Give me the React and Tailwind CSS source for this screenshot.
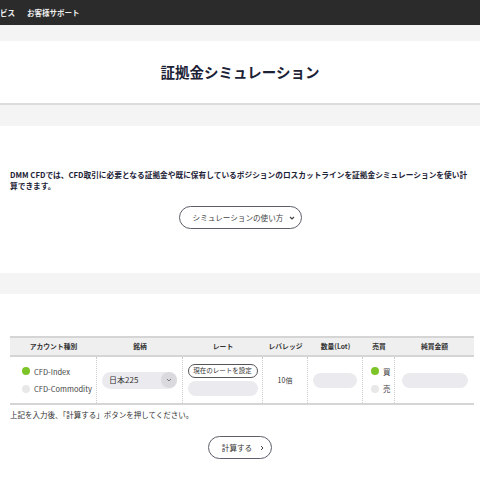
import React from 'react';

const font = { fontFamily: '"Noto Sans CJK JP", "Noto Sans", sans-serif' };

function Radio({ on, label }) {
  return (
    <div className="flex items-center gap-[4px]">
      <span className={`w-[8px] h-[8px] rounded-full ${on ? 'bg-[#7cc427]' : 'bg-[#e8e8e8]'}`}></span>
      <span className="text-[7.5px] text-[#444]">{label}</span>
    </div>
  );
}

function Pill({ className = '' }) {
  return <div className={`h-[15px] rounded-full bg-[#ebebef] ${className}`}></div>;
}

export default function App() {
  const cols = [
    { label: 'アカウント種別', w: 'w-[87px]' },
    { label: '銘柄', w: 'w-[86px]' },
    { label: 'レート', w: 'w-[80px]' },
    { label: 'レバレッジ', w: 'w-[45px]' },
    { label: '数量(Lot)', w: 'w-[55px]' },
    { label: '売買', w: 'w-[32px]' },
    { label: '純買金額', w: 'flex-1' },
  ];

  return (
    <div className="w-[480px] h-[480px] overflow-hidden bg-[#f4f4f4]" style={font}>
      {/* top nav */}
      <div className="h-[25px] bg-[#2b2b2b] flex items-center gap-[12px] text-[7.5px] font-bold text-[#eee]">
        <span>ビス</span>
        <span>お客様サポート</span>
      </div>

      <div className="h-[16px]"></div>

      {/* title */}
      <div className="h-[64px] bg-white border-b-2 border-[#dcdcdc] flex items-center justify-center">
        <h1 className="text-[14.5px] font-bold text-[#1c2236]">証拠金シミュレーション</h1>
      </div>

      <div className="h-[21px]"></div>

      {/* intro */}
      <div className="h-[147px] bg-white px-[10px] pt-[43px]">
        <p className="text-[7.7px] font-bold text-[#1c2236] leading-[11px]">
          DMM CFDでは、CFD取引に必要となる証拠金や既に保有しているポジションのロスカットラインを証拠金シミュレーションを使い計<br />算できます。
        </p>
        <div className="flex justify-center mt-[15px]">
          <button className="w-[123px] h-[23px] rounded-full border border-[#5c5f6a] flex items-center justify-center gap-[6px] text-[7.6px] text-[#444] pl-[8px]">
            シミュレーションの使い方
            <svg width="6" height="4" viewBox="0 0 6 4"><path d="M1 1l2 2 2-2" fill="none" stroke="#444" strokeWidth="1.2" /></svg>
          </button>
        </div>
      </div>

      <div className="h-[21px]"></div>

      {/* simulation */}
      <div className="bg-white h-[200px] pt-[42px] px-[10px]">
        <div className="w-[464px]">
          <div className="flex h-[21px] bg-[#efefef] border-t-2 border-b-2 border-[#d5d5d5] items-center">
            {cols.map((c) => (
              <div key={c.label} className={`${c.w} text-center text-[6.8px] font-bold text-[#333]`}>{c.label}</div>
            ))}
          </div>
          <div className="flex h-[48px] border-b-2 border-[#d5d5d5]">
            <div className="w-[87px] border-r border-dotted border-[#ccc] flex flex-col justify-center gap-[6px] pl-[12px]">
              <Radio on label="CFD-Index" />
              <Radio label="CFD-Commodity" />
            </div>
            <div className="w-[86px] border-r border-dotted border-[#ccc] flex items-center px-[5px]">
              <div className="w-[75px] h-[17px] rounded-full bg-[#ebebef] flex items-center justify-between pl-[7px]">
                <span className="text-[8px] text-[#333]">日本225</span>
                <span className="w-[16px] h-[16px] rounded-full bg-[#d9d9de] flex items-center justify-center">
                  <svg width="6" height="4" viewBox="0 0 6 4"><path d="M1 1l2 2 2-2" fill="none" stroke="#777" strokeWidth="1" /></svg>
                </span>
              </div>
            </div>
            <div className="w-[80px] border-r border-dotted border-[#ccc] flex flex-col justify-center items-center gap-[3px]">
              <div className="w-[70px] h-[14px] rounded-full border border-[#555] flex items-center justify-center text-[6.5px] text-[#333]">現在のレートを設定</div>
              <Pill className="w-[70px]" />
            </div>
            <div className="w-[45px] border-r border-dotted border-[#ccc] flex items-center justify-center text-[7px] text-[#333]">10倍</div>
            <div className="w-[55px] border-r border-dotted border-[#ccc] flex items-center justify-center">
              <Pill className="w-[44px]" />
            </div>
            <div className="w-[32px] border-r border-dotted border-[#ccc] flex flex-col justify-center gap-[6px] pl-[8px]">
              <Radio on label="買" />
              <Radio label="売" />
            </div>
            <div className="flex-1 flex items-center justify-center">
              <Pill className="w-[66px]" />
            </div>
          </div>
        </div>
        <p className="text-[7.5px] text-[#333] mt-[4px]">上記を入力後、「計算する」ボタンを押してください。</p>
        <div className="flex justify-center mt-[16px]">
          <button className="w-[64px] h-[23px] rounded-full border border-[#5c5f6a] flex items-center justify-center gap-[8px] text-[7.6px] text-[#333] pl-[6px]">
            計算する
            <svg width="4" height="6" viewBox="0 0 4 6"><path d="M1 1l2 2-2 2" fill="none" stroke="#444" strokeWidth="1" /></svg>
          </button>
        </div>
      </div>
    </div>
  );
}
